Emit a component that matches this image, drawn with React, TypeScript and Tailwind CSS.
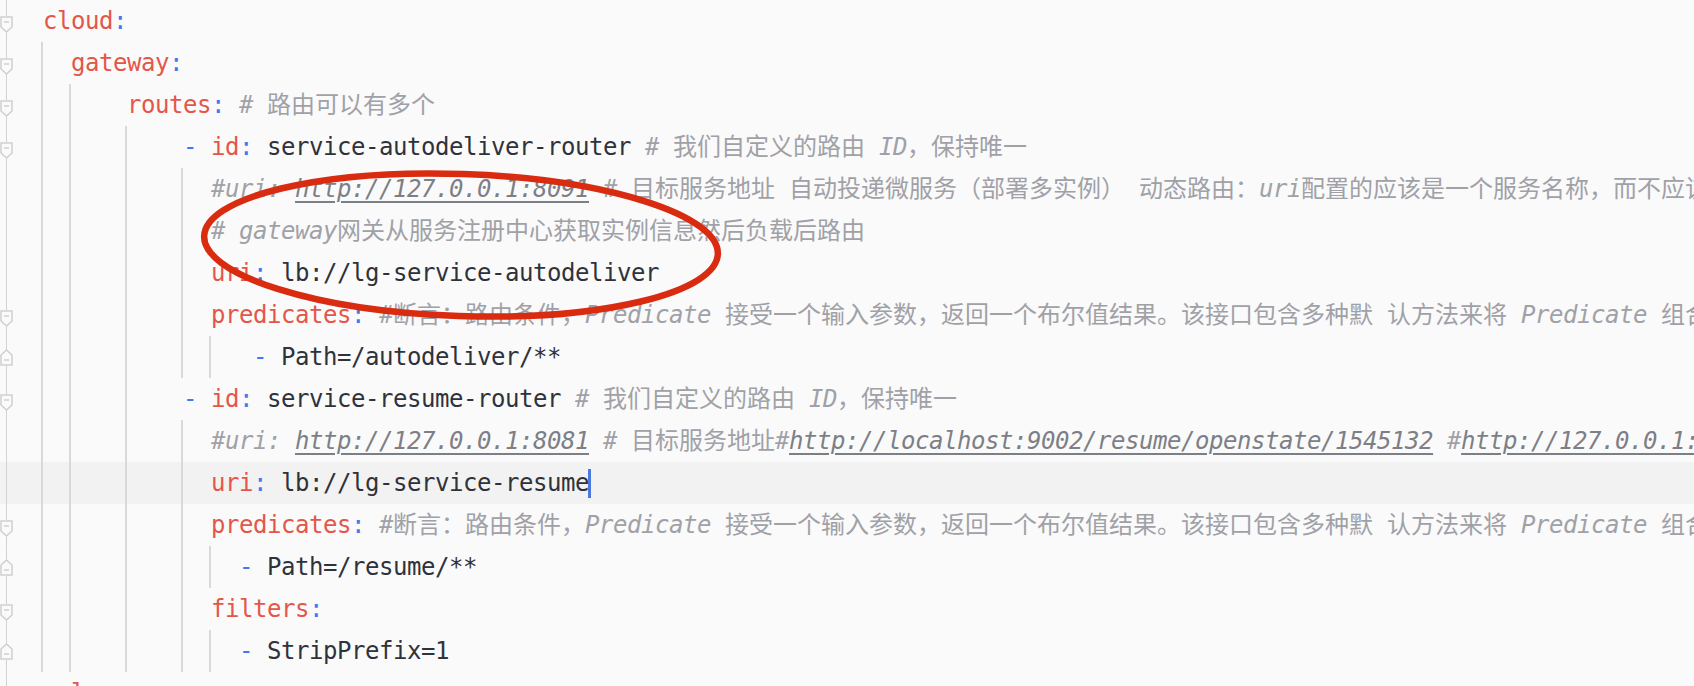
import React from 'react';

type Kind = 'key' | 'punct' | 'text' | 'comment' | 'link';
type Tok = [Kind, string];
type Row = {
  indent: number;
  guides: number[];
  fold?: 'start' | 'end';
  current?: boolean;
  caret?: boolean;
  toks: Tok[];
};

const tone: Record<Kind, string> = {
  key: 'text-[#e45649]',
  punct: 'text-[#4078f2]',
  text: 'text-[#2f323a]',
  comment: 'text-[#a0a1a7] italic',
  link: 'text-[#7d7f87] italic underline decoration-[1.5px] underline-offset-[4px]',
};

const CJK = /([\u2E80-\u9FFF\u3000-\u303F\uFF00-\uFFEF]+)/;

const PRED =
  '#断言：路由条件，Predicate 接受一个输入参数，返回一个布尔值结果。该接口包含多种默 认方法来将 Predicate 组合成其他复杂的逻辑（比如：与，或，非）。';

const rows: Row[] = [
  { indent: 0, guides: [], fold: 'start', toks: [['key', 'cloud'], ['punct', ':']] },
  { indent: 2, guides: [0], fold: 'start', toks: [['key', 'gateway'], ['punct', ':']] },
  {
    indent: 6,
    guides: [0, 2],
    fold: 'start',
    toks: [['key', 'routes'], ['punct', ':'], ['text', ' '], ['comment', '# 路由可以有多个']],
  },
  {
    indent: 10,
    guides: [0, 2, 6],
    fold: 'start',
    toks: [
      ['punct', '-'],
      ['text', ' '],
      ['key', 'id'],
      ['punct', ':'],
      ['text', ' service-autodeliver-router '],
      ['comment', '# 我们自定义的路由 ID，保持唯一'],
    ],
  },
  {
    indent: 12,
    guides: [0, 2, 6, 10],
    toks: [
      ['comment', '#uri: '],
      ['link', 'http://127.0.0.1:8091'],
      [
        'comment',
        ' # 目标服务地址 自动投递微服务（部署多实例） 动态路由：uri配置的应该是一个服务名称，而不应该是一个具体的服务实例的地址',
      ],
    ],
  },
  {
    indent: 12,
    guides: [0, 2, 6, 10],
    toks: [['comment', '# gateway网关从服务注册中心获取实例信息然后负载后路由']],
  },
  {
    indent: 12,
    guides: [0, 2, 6, 10],
    toks: [['key', 'uri'], ['punct', ':'], ['text', ' lb://lg-service-autodeliver']],
  },
  {
    indent: 12,
    guides: [0, 2, 6, 10],
    fold: 'start',
    toks: [['key', 'predicates'], ['punct', ':'], ['text', ' '], ['comment', PRED]],
  },
  {
    indent: 15,
    guides: [0, 2, 6, 10, 12],
    fold: 'end',
    toks: [['punct', '-'], ['text', ' Path=/autodeliver/**']],
  },
  {
    indent: 10,
    guides: [0, 2, 6],
    fold: 'start',
    toks: [
      ['punct', '-'],
      ['text', ' '],
      ['key', 'id'],
      ['punct', ':'],
      ['text', ' service-resume-router '],
      ['comment', '# 我们自定义的路由 ID，保持唯一'],
    ],
  },
  {
    indent: 12,
    guides: [0, 2, 6, 10],
    toks: [
      ['comment', '#uri: '],
      ['link', 'http://127.0.0.1:8081'],
      ['comment', ' # 目标服务地址#'],
      ['link', 'http://localhost:9002/resume/openstate/1545132'],
      ['comment', ' #'],
      ['link', 'http://127.0.0.1:8081/resume/openstate/1545132'],
    ],
  },
  {
    indent: 12,
    guides: [0, 2, 6, 10],
    current: true,
    caret: true,
    toks: [['key', 'uri'], ['punct', ':'], ['text', ' lb://lg-service-resume']],
  },
  {
    indent: 12,
    guides: [0, 2, 6, 10],
    fold: 'start',
    toks: [['key', 'predicates'], ['punct', ':'], ['text', ' '], ['comment', PRED]],
  },
  {
    indent: 14,
    guides: [0, 2, 6, 10, 12],
    fold: 'end',
    toks: [['punct', '-'], ['text', ' Path=/resume/**']],
  },
  {
    indent: 12,
    guides: [0, 2, 6, 10],
    fold: 'start',
    toks: [['key', 'filters'], ['punct', ':']],
  },
  {
    indent: 14,
    guides: [0, 2, 6, 10, 12],
    fold: 'end',
    toks: [['punct', '-'], ['text', ' StripPrefix=1']],
  },
  { indent: 0, guides: [], toks: [['key', 'sql'], ['punct', ':']] },
];

const FoldMark = ({ kind }: { kind: 'start' | 'end' }) => (
  <svg width="13" height="17" viewBox="0 0 13 17" className="shrink-0">
    {kind === 'start' ? (
      <>
        <path d="M1 1H12V11L6.5 16L1 11Z" fill="#fafafa" stroke="#cfcfcf" strokeWidth="1.5" />
        <path d="M4 6H9" stroke="#cfcfcf" strokeWidth="1.5" />
      </>
    ) : (
      <>
        <path d="M1 16H12V6L6.5 1L1 6Z" fill="#fafafa" stroke="#cfcfcf" strokeWidth="1.5" />
        <path d="M4 11H9" stroke="#cfcfcf" strokeWidth="1.5" />
      </>
    )}
  </svg>
);

const Gutter = ({ fold }: { fold?: 'start' | 'end' }) => (
  <div className="flex h-full w-[13px] shrink-0 flex-col items-center">
    {fold && <div className={`w-[1.5px] shrink-0 bg-[#d2d2d2] ${fold === 'start' ? 'h-[16px]' : 'h-[13px]'}`} />}
    {fold && <FoldMark kind={fold} />}
    <div className="w-[1.5px] flex-1 bg-[#d2d2d2]" />
  </div>
);

const Text = ({ kind, text }: { kind: Kind; text: string }) => {
  const parts = text.split(CJK).filter(Boolean);
  return (
    <>
      {parts.map((s, i) =>
        CJK.test(s) ? (
          <span
            key={i}
            className="font-['Noto_Sans_CJK_SC',sans-serif] not-italic leading-none tracking-normal text-[#a0a1a7]"
          >
            {s}
          </span>
        ) : (
          <span key={i} className={tone[kind]}>
            {s}
          </span>
        )
      )}
    </>
  );
};

const Line = ({ row }: { row: Row }) => (
  <div className={`flex h-[42px] shrink-0 items-stretch ${row.current ? 'bg-[#f2f2f2]' : ''}`}>
    <div
      className={`flex w-[43px] shrink-0 ${row.guides.includes(0) ? 'border-r-2 border-[#d9d9d9]' : ''}`}
    >
      <Gutter fold={row.fold} />
    </div>
    {Array.from({ length: row.indent }).map((_, c) => (
      <div
        key={c}
        className={`w-[14px] shrink-0 ${row.guides.includes(c + 1) ? 'border-r-2 border-[#d9d9d9]' : ''}`}
      />
    ))}
    <div className="flex shrink-0 items-center whitespace-pre leading-[42px] tracking-[-0.449px]">
      <span>
        {row.toks.map(([k, t], i) => (
          <Text key={i} kind={k} text={t} />
        ))}
      </span>
      {row.caret && <span className="ml-[-1px] h-[29px] w-[3px] bg-[#4b79e0]" />}
    </div>
  </div>
);

export default function App() {
  return (
    <div className="relative h-[686px] w-[1694px] overflow-hidden bg-[#fafafa] font-['DejaVu_Sans_Mono',monospace] text-[24px]">
      <div className="flex flex-col">
        {rows.map((r, i) => (
          <Line key={i} row={r} />
        ))}
      </div>

      {/* red hand-drawn annotation */}
      <svg className="pointer-events-none absolute left-0 top-0" width="1694" height="686">
        <ellipse
          cx="461"
          cy="245"
          rx="257"
          ry="71"
          transform="rotate(2 461 245)"
          fill="none"
          stroke="#d92b10"
          strokeWidth="6.5"
        />
      </svg>
    </div>
  );
}
